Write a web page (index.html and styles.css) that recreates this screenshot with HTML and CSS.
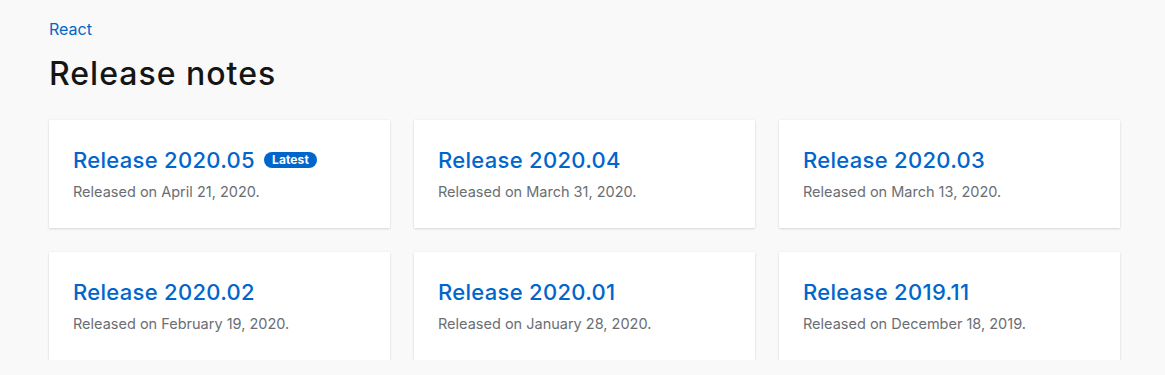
FILE: index.html
```html
<!DOCTYPE html>
<html lang="en">
<head>
<meta charset="utf-8">
<title>Release notes</title>
<link rel="stylesheet" href="styles.css">
</head>
<body>
<main class="page">
  <nav class="crumb"><a href="#">React</a></nav>
  <h1 class="page-title">Release notes</h1>
  <section class="grid">
    <article class="card">
      <h2 class="card-title"><a href="#">Release 2020.05</a><span class="badge">Latest</span></h2>
      <p class="card-date">Released on April 21, 2020.</p>
    </article>
    <article class="card">
      <h2 class="card-title"><a href="#">Release 2020.04</a></h2>
      <p class="card-date">Released on March 31, 2020.</p>
    </article>
    <article class="card">
      <h2 class="card-title"><a href="#">Release 2020.03</a></h2>
      <p class="card-date">Released on March 13, 2020.</p>
    </article>
    <article class="card">
      <h2 class="card-title"><a href="#">Release 2020.02</a></h2>
      <p class="card-date">Released on February 19, 2020.</p>
    </article>
    <article class="card">
      <h2 class="card-title"><a href="#">Release 2020.01</a></h2>
      <p class="card-date">Released on January 28, 2020.</p>
    </article>
    <article class="card">
      <h2 class="card-title"><a href="#">Release 2019.11</a></h2>
      <p class="card-date">Released on December 18, 2019.</p>
    </article>
  </section>
</main>
</body>
</html>
```
FILE: styles.css
```css
html, body {
  margin: 0;
  padding: 0;
  background: #f9f9f9;
}
body {
  font-family: Inter, "Noto Sans", sans-serif;
  color: #151515;
}
a {
  color: #0066cc;
  text-decoration: none;
}
.page {
  padding: 17px 45px 0 49px;
}
.crumb {
  font-size: 16px;
  line-height: 24px;
}
.page-title {
  margin: 13px 0 0;
  font-size: 32px;
  font-weight: 500;
  line-height: 40px;
  letter-spacing: 1px;
}
.grid {
  margin-top: 26px;
  display: grid;
  grid-template-columns: repeat(3, 1fr);
  gap: 24px;
}
.card {
  background: #fff;
  height: 108px;
  box-sizing: border-box;
  padding: 25px 24px 24px;
  box-shadow: 0 1px 2px rgba(3, 3, 3, 0.12), 0 0 2px rgba(3, 3, 3, 0.06);
}
.card-title {
  margin: 0;
  font-size: 22px;
  font-weight: 500;
  line-height: 30px;
  letter-spacing: 0.3px;
  display: flex;
  align-items: center;
  gap: 9px;
}
.badge {
  background: #0066cc;
  color: #fff;
  font-size: 12px;
  font-weight: 700;
  line-height: 16px;
  letter-spacing: 0.1px;
  border-radius: 30px;
  padding: 0 8px;
}
.card-date {
  margin: 6px 0 0;
  font-size: 14.5px;
  line-height: 21px;
  color: #6a6e73;
}
```
